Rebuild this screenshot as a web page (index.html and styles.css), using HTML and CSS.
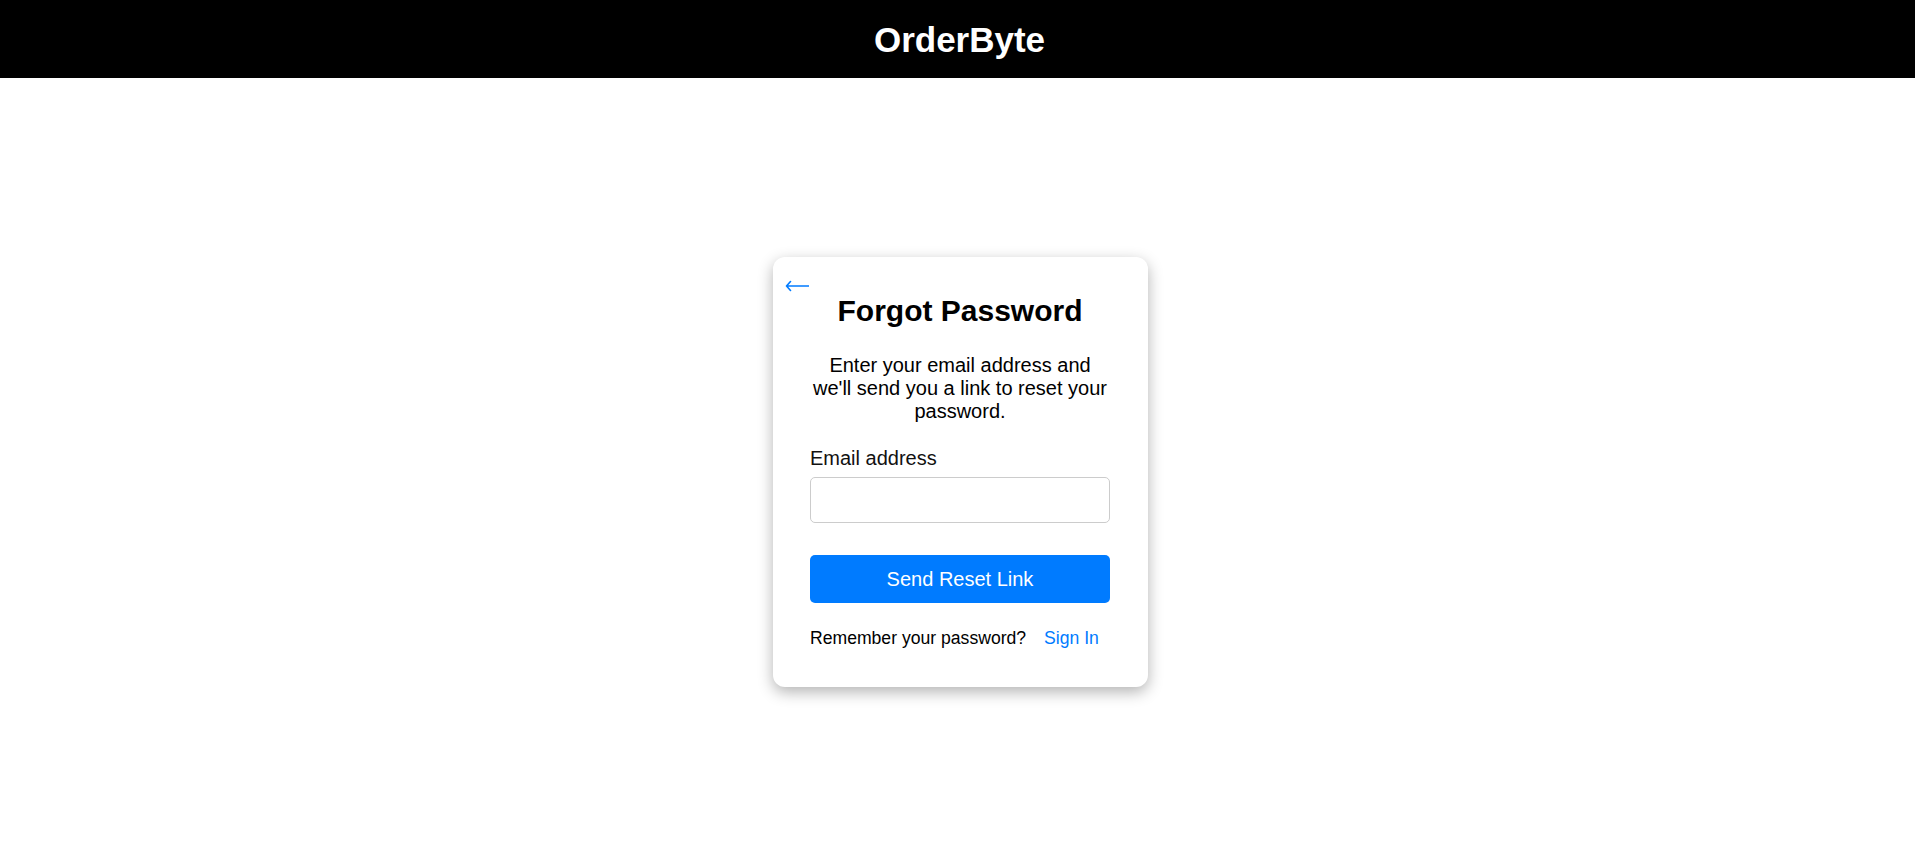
FILE: index.html
```html
<!DOCTYPE html>
<html lang="en">
<head>
<meta charset="utf-8">
<title>OrderByte - Forgot Password</title>
<link rel="stylesheet" href="styles.css">
</head>
<body>
<header class="topbar">
  <h1 class="brand">OrderByte</h1>
</header>
<main class="page">
  <section class="card">
    <button class="back" type="button" aria-label="Back">
      <svg width="24" height="12" viewBox="0 0 24 12" aria-hidden="true">
        <path d="M1.5 6H23.5M1.5 6L5.5 1.5M1.5 6L5.5 10.5" fill="none" stroke="#007bff" stroke-width="1.6" stroke-linecap="round"/>
      </svg>
    </button>
    <h2 class="title">Forgot Password</h2>
    <p class="intro">Enter your email address and we'll send you a link to reset your password.</p>
    <form class="form">
      <label class="label" for="email">Email address</label>
      <input class="input" id="email" type="email">
      <button class="submit" type="button">Send Reset Link</button>
    </form>
    <div class="footer">
      <span>Remember your password?</span><a class="link" href="#">Sign In</a>
    </div>
  </section>
</main>
</body>
</html>
```
FILE: styles.css
```css
html, body {
  margin: 0;
  padding: 0;
}
body {
  font-family: "Liberation Sans", Arial, sans-serif;
  color: #000;
  background: #fff;
}
.topbar {
  box-sizing: border-box;
  height: 78px;
  padding-left: 4px;
  background: #000;
  display: flex;
  align-items: center;
  justify-content: center;
}
.brand {
  margin: 0;
  color: #fff;
  font-size: 35px;
  font-weight: bold;
  line-height: 1;
  padding-top: 1px;
}
.page {
  box-sizing: border-box;
  min-height: calc(100vh - 78px);
  padding-bottom: 3px;
  display: flex;
  align-items: center;
  justify-content: center;
}
.card {
  position: relative;
  width: 300px;
  padding: 37.5px 37.5px 37.5px;
  background: #fff;
  border-radius: 12px;
  box-shadow: 0 5px 15px rgba(0, 0, 0, 0.3);
  margin-left: 5px;
}
.back {
  position: absolute;
  top: 23px;
  left: 12px;
  padding: 0;
  border: none;
  background: none;
  display: flex;
  cursor: pointer;
}
.title {
  margin: 0 0 26px;
  font-size: 30px;
  font-weight: bold;
  text-align: center;
}
.intro {
  margin: 0 0 24px;
  font-size: 20px;
  line-height: 23px;
  text-align: center;
}
.form {
  display: flex;
  flex-direction: column;
}
.label {
  font-size: 20px;
  line-height: 23px;
  color: #111;
  margin-bottom: 7px;
}
.input {
  box-sizing: border-box;
  width: 300px;
  height: 46px;
  border: 1px solid #ccc;
  border-radius: 5px;
  font-family: inherit;
  font-size: 18px;
  padding: 0 10px;
  margin: 0;
}
.submit {
  margin-top: 32px;
  height: 48px;
  border: none;
  border-radius: 5px;
  background: #007bff;
  color: #fff;
  font-family: inherit;
  font-size: 20px;
  cursor: pointer;
}
.footer {
  margin-top: 25px;
  font-size: 17.6px;
  color: #000;
}
.link {
  margin-left: 18px;
  color: #007bff;
  text-decoration: none;
}
```
